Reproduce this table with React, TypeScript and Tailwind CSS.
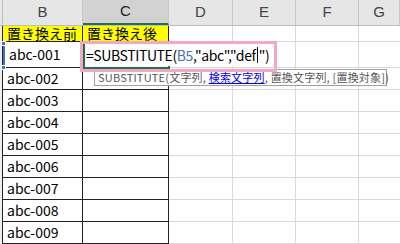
import React from 'react';

const cols = [
  { key: 'B', w: 'w-[80px]' },
  { key: 'C', w: 'w-[86px]' },
  { key: 'D', w: 'w-[64px]' },
  { key: 'E', w: 'w-[63px]' },
  { key: 'F', w: 'w-[63px]' },
  { key: 'G', w: 'flex-1' },
];

const rows = ['abc-002', 'abc-003', 'abc-004', 'abc-005', 'abc-006', 'abc-007', 'abc-008', 'abc-009'];

const font = { fontFamily: '"Noto Sans CJK JP", "Liberation Sans", sans-serif' };

const Handle: React.FC<{ className: string }> = ({ className }) => (
  <div className={`absolute w-[5px] h-[5px] bg-[#4472c4] border border-white ${className}`} />
);

// empty cells to the right of the table
const EmptyCells = () => (
  <>
    <div className="w-[64px] border-r border-b border-[#d9d9d9]" />
    <div className="w-[63px] border-r border-b border-[#d9d9d9]" />
    <div className="w-[63px] border-r border-b border-[#d9d9d9]" />
    <div className="flex-1 border-b border-[#d9d9d9]" />
  </>
);

const App: React.FC = () => {
  return (
    <div className="relative w-[400px] h-[244px] overflow-hidden bg-white text-[14px] text-black" style={font}>
      {/* Column headers */}
      <div className="flex h-[26px] bg-[#e6e6e6] border-b border-[#bdbdbd]">
        <div className="w-[3px] border-r border-[#bdbdbd]" />
        {cols.map((c) => (
          <div
            key={c.key}
            className={`${c.w} flex items-center justify-center text-[15px] border-r border-[#c8c8c8] ${
              c.key === 'C' ? 'bg-[#d2d2d2] text-[#222] border-b-2 border-b-[#217346]' : 'text-[#444]'
            }`}
            style={{ fontFamily: '"Liberation Sans", sans-serif' }}
          >
            {c.key}
          </div>
        ))}
      </div>

      {/* Row 1: titles */}
      <div className="flex h-[16px]">
        <div className="w-[3px] bg-[#efefef] border-r border-[#222]" />
        <div className="w-[80px] bg-[#ffff00] border-r border-b border-[#222] pl-[4px] leading-[15px]">置き換え前</div>
        <div className="w-[86px] bg-[#ffff00] border-r border-b border-[#222] pl-[4px] leading-[15px]">置き換え後</div>
        <EmptyCells />
      </div>

      {/* Row 2: abc-001 */}
      <div className="flex h-[26px]">
        <div className="w-[3px] bg-[#efefef] border-r border-[#222]" />
        <div className="w-[80px] border-r border-b border-[#222] pl-[4px] flex items-center border-l-2 border-l-[#4472c4]">abc-001</div>
        <div className="w-[86px] border-r border-b border-[#222]" />
        <EmptyCells />
      </div>

      {rows.map((r) => (
        <div key={r} className="flex h-[22px]">
          <div className="w-[3px] bg-[#efefef] border-r border-[#222]" />
          <div className="w-[80px] border-r border-b border-[#222] pl-[4px] flex items-center">{r}</div>
          <div className="w-[86px] border-r border-b border-[#222]" />
          <EmptyCells />
        </div>
      ))}

      {/* B5 reference handles */}
      <Handle className="left-[1px] top-[41px]" />
      <Handle className="left-[80px] top-[41px]" />
      <Handle className="left-[1px] top-[65px]" />
      <Handle className="left-[80px] top-[65px]" />

      {/* Active cell (editing) */}
      <div className="absolute left-[83px] top-[42px] w-[87px] h-[27px] border-2 border-[#217346]" />
      <div className="absolute left-[86px] top-[44px] h-[22px] flex items-center text-[14px] tracking-[-0.4px] whitespace-nowrap bg-white pr-[2px]">
        =SUBSTITUTE(<span className="text-[#4472c4]">B5</span>,"abc","def<span className="inline-block w-px h-[16px] mx-[1px] bg-black" />")
      </div>

      {/* Function tooltip */}
      <div className="absolute left-[94px] top-[69px] w-[293px] h-[17px] px-[3px] flex items-center bg-white border border-[#a0a0a0] text-[11px] tracking-[0.2px] text-[#555] whitespace-nowrap">
        SUBSTITUTE(文字列,&nbsp;<span className="text-[#0000ee] underline">検索文字列</span>, 置換文字列, [置換対象])
      </div>

      {/* Pink annotation frame */}
      <div className="absolute left-[80px] top-[41px] w-[197px] h-[31px] border-[3px] border-[#f4a7c6]" />
    </div>
  );
};

export default App;
